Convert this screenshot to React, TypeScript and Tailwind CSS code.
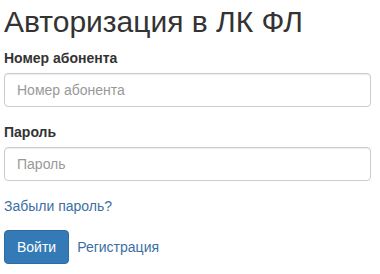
export default function App() {
  return (
    <div className="min-h-screen bg-white font-['Liberation_Sans',Arial,sans-serif] text-[14px] leading-[20px] text-[#333]">
      <div className="ml-[4px] w-[367px] pt-[5px]">
        <h2 className="mb-[10px] text-[30px] leading-[33px] font-normal">Авторизация в ЛК ФЛ</h2>
        <form onSubmit={(e) => e.preventDefault()}>
          <div className="mb-[15px]">
            <label className="mb-[5px] block font-bold">Номер абонента</label>
            <input
              type="text"
              placeholder="Номер абонента"
              className="block h-[34px] w-full rounded-[4px] border border-[#ccc] px-[12px] py-[6px] text-[14px] text-[#555] shadow-[inset_0_1px_1px_rgba(0,0,0,0.075)] outline-none placeholder:text-[#999]"
            />
          </div>
          <div className="mb-[15px]">
            <label className="mb-[5px] block font-bold">Пароль</label>
            <input
              type="password"
              placeholder="Пароль"
              className="block h-[34px] w-full rounded-[4px] border border-[#ccc] px-[12px] py-[6px] text-[14px] text-[#555] shadow-[inset_0_1px_1px_rgba(0,0,0,0.075)] outline-none placeholder:text-[#999]"
            />
          </div>
          <div className="mb-[14px]">
            <a href="#" className="text-[#3b6fa3]">Забыли пароль?</a>
          </div>
          <div className="flex items-center gap-[8px]">
            <button
              type="submit"
              className="h-[34px] rounded-[4px] border border-[#2e6da4] bg-[#337ab7] px-[12px] text-[14px] text-white"
            >
              Войти
            </button>
            <a href="#" className="text-[#3b6fa3]">Регистрация</a>
          </div>
        </form>
      </div>
    </div>
  );
}
